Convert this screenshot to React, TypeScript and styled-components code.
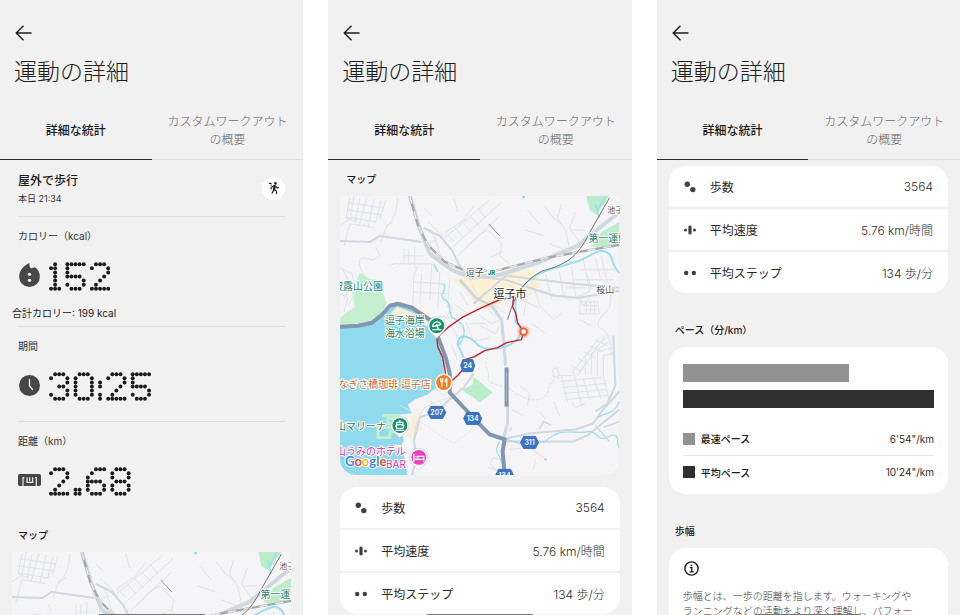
import React from "react";
import styled, { createGlobalStyle } from "styled-components";

const GlobalStyle = createGlobalStyle`
  *, *::before, *::after { box-sizing: border-box; }
  body {
    margin: 0;
    background: #ffffff;
    color: #1c1c1c;
    font-family: Inter, "Noto Sans CJK JP", sans-serif;
    font-size: 12px;
  }
  button { font: inherit; color: inherit; background: none; border: 0; padding: 0; }
  h1, h2, h3, p, dl, dt, dd, ul { margin: 0; padding: 0; font-weight: 400; }
`;

const Gallery = styled.div`
  display: grid;
  grid-template-columns: repeat(3, minmax(0, 1fr));
  gap: 25px;
  height: 100vh;
  overflow: hidden;
`;

const Screen = styled.main`
  position: relative;
  display: flex;
  flex-direction: column;
  background: #f1f1f1;
  overflow: hidden;
`;

const Header = styled.header`
  flex: none;
  padding: 25px 14px 16px;
`;

const BackButton = styled.button`
  display: block;
  height: 16px;
  margin: 0 1px 14px;
  svg { display: block; }
`;

const Title = styled.h1`
  font-family: "Noto Sans CJK JP", sans-serif;
  font-size: 23px;
  font-weight: 300;
  line-height: 30px;
`;

const TabBar = styled.nav`
  flex: none;
  display: grid;
  grid-template-columns: 1fr 1fr;
`;

const Tab = styled.button<{ $active?: boolean }>`
  height: 59px;
  padding: 2px 12px 0;
  line-height: 18px;
  font-weight: ${(p) => (p.$active ? 500 : 300)};
  color: ${(p) => (p.$active ? "#1a1a1a" : "#666666")};
  border-bottom: 1px solid ${(p) => (p.$active ? "#2a2a2a" : "#dedede")};
`;

const Body = styled.div`
  flex: 1 1 0;
  min-height: 0;
  overflow: hidden;
`;

const Rule = styled.hr`
  height: 1px;
  margin: 0 18px;
  border: 0;
  background: #dfdfdf;
`;

const Workout = styled.section`
  display: flex;
  justify-content: space-between;
  align-items: center;
  padding: 12px 18px 10px;
`;

const WorkoutName = styled.h2`
  font-size: 12px;
  font-weight: 500;
  line-height: 18px;
  margin-bottom: 2px;
`;

const WorkoutTime = styled.p`
  font-size: 9px;
  line-height: 14px;
  color: #333333;
`;

const RoundBadge = styled.span`
  display: flex;
  align-items: center;
  justify-content: center;
  width: 23px;
  height: 23px;
  margin-bottom: 2px;
  border-radius: 50%;
  background: #ffffff;
`;

const Metric = styled.section`
  padding-top: 11px;
`;

const MetricLabel = styled.h3`
  margin: 0 18px 18px;
  font-size: 10px;
  line-height: 16px;
  color: #333333;
`;

const MetricValue = styled.div`
  display: flex;
  align-items: center;
  gap: 8px;
  height: 29px;
  padding: 0 18px;
`;

const MetricIcon = styled.span`
  display: flex;
  justify-content: center;
  width: 23px;
  padding-bottom: 3px;
`;

const MetricNote = styled.p`
  margin: 14px 12px 5px;
  font-size: 10px;
  line-height: 16px;
  color: #222222;
`;

const MetricEnd = styled.div`
  height: 20px;
`;

const Dots = styled.svg`
  display: block;
  height: 29px;
  width: auto;
  fill: #1a1a1a;
`;

const SectionTitle = styled.h2<{ $top: number }>`
  padding: ${(p) => p.$top}px 18px 7px;
  font-size: 10px;
  font-weight: 500;
  line-height: 20px;
`;

const MapFrame = styled.div`
  margin: 0 12px;
  border-radius: 0 0 16px 16px;
  overflow: hidden;
  svg { display: block; width: 100%; height: auto; }
`;

const StatList = styled.dl<{ $top: number }>`
  display: grid;
  gap: 2px;
  margin: ${(p) => p.$top}px 12px 0;
  border-radius: 17px;
  overflow: hidden;
`;

const StatRow = styled.div`
  display: flex;
  align-items: center;
  height: 41px;
  padding: 0 15px;
  border-radius: 2px;
  background: #ffffff;
  svg { flex: none; margin-right: 14px; }
`;

const StatName = styled.dt`
  flex: 1;
  color: #2a2a2a;
`;

const StatValue = styled.dd`
  color: #2c2c2c;
  font-weight: 300;
`;

const Card = styled.section`
  margin: 0 12px;
  padding: 17px 14px 6px;
  border-radius: 17px;
  background: #ffffff;
`;

const Bar = styled.div<{ $tone: string }>`
  height: 18px;
  margin-bottom: 8px;
  background: ${(p) => p.$tone};
`;

const Legend = styled.dl`
  padding-top: 6px;
`;

const LegendRow = styled.div`
  display: flex;
  align-items: center;
  height: 33px;
  font-size: 10px;
  & + & {
    border-top: 1px solid #e8e8e8;
  }
`;

const Swatch = styled.span<{ $tone: string }>`
  width: 12px;
  height: 12px;
  margin-right: 6px;
  background: ${(p) => p.$tone};
`;

const LegendName = styled.dt`
  flex: 1;
  font-weight: 500;
`;

const LegendValue = styled.dd`
  color: #2a2a2a;
`;

const InfoCard = styled(Card)`
  padding: 13px 32px 16px 14px;
  svg { display: block; margin-bottom: 12px; }
`;

const InfoText = styled.p`
  font-size: 10px;
  font-weight: 300;
  line-height: 15px;
  color: #3c3c3c;
`;

const HomeIndicator = styled.div`
  position: absolute;
  bottom: 0;
  left: 50%;
  width: 35%;
  height: 1px;
  transform: translateX(-50%);
  background: #777777;
`;

const GLYPHS: Record<string, string[]> = {
  "0": [".###.", "#...#", "#...#", "#...#", "#...#", "#...#", ".###."],
  "1": [".#.", "##.", ".#.", ".#.", ".#.", ".#.", "###"],
  "2": [".###.", "#...#", "....#", "...#.", "..#..", ".#...", "#####"],
  "3": [".###.", "#...#", "....#", "..##.", "....#", "#...#", ".###."],
  "5": ["#####", "#....", "#....", "####.", "....#", "#...#", ".###."],
  "6": ["..###", ".#...", "#....", "####.", "#...#", "#...#", ".###."],
  "8": [".###.", "#...#", "#...#", ".###.", "#...#", "#...#", ".###."],
  ":": [".", ".", "#", "#", ".", "#", "#"],
  ".": ["..", "..", "..", "..", "..", "##", "##"],
};

function DotNumber({ value }: { value: string }) {
  const dots: React.ReactNode[] = [];
  let column = 0;
  [...value].forEach((ch, n) => {
    const rows = GLYPHS[ch];
    rows.forEach((row, y) =>
      [...row].forEach((cell, x) => {
        if (cell === "#") {
          dots.push(<circle key={`${n}-${x}-${y}`} cx={(column + x) * 10 + 5} cy={y * 10 + 5.5} r={4.8} />);
        }
      })
    );
    column += rows[0].length + 1;
  });
  return (
    <Dots viewBox={`0 0 ${(column - 1) * 10} 71`} role="img" aria-label={value}>
      {dots}
    </Dots>
  );
}

const FlameIcon = () => (
  <svg width="21" height="24" viewBox="0 0 62 72">
    <path d="M31 0V9Q33 18 40 15L47 13Q62 23 62 41A31 31 0 0 1 0 41C0 22 14 8 31 0Z" fill="#474747" />
    <circle cx="31" cy="34" r="5" fill="#f1f1f1" />
    <circle cx="31" cy="52" r="5" fill="#f1f1f1" />
  </svg>
);

const ClockIcon = () => (
  <svg width="21" height="21" viewBox="0 0 21 21">
    <circle cx="10.5" cy="10.5" r="10.5" fill="#474747" />
    <path d="M10.5 4.5v6.5l3 3.5" fill="none" stroke="#f1f1f1" strokeWidth="1.3" strokeLinecap="round" />
  </svg>
);

const RulerIcon = () => (
  <svg width="23" height="12" viewBox="0 0 69 36">
    <rect width="69" height="36" rx="5" fill="#474747" />
    <path d="M15 36V11H19M55 36V11H51M27 10V25H44V10M35 10V21" fill="none" stroke="#f1f1f1" strokeWidth="3.5" />
  </svg>
);

const WalkIcon = () => (
  <svg width="14" height="14" viewBox="0 0 14 14" fill="none" stroke="#222" strokeLinecap="round" strokeLinejoin="round">
    <circle cx="8.4" cy="2.4" r="1.3" fill="#222" stroke="none" />
    <path d="M7.6 5.2L7 8.4" strokeWidth="2.4" />
    <path d="M7 8.6L5 12.2M7.4 8.6L9.3 10L9.6 12.5M6.6 5L4.4 6.2L4 8M8.6 5L10 6.8L11.5 6.6" strokeWidth="1.2" />
    <path d="M2.4 2.4h1.6M4 4h.4" strokeWidth="1.2" />
  </svg>
);

const StepsIcon = () => (
  <svg width="12" height="12" viewBox="0 0 12 12" fill="#404040">
    <circle cx="3.3" cy="3.3" r="2.7" />
    <circle cx="8.8" cy="8.6" r="2.7" />
  </svg>
);
const SpeedIcon = () => (
  <svg width="12" height="12" viewBox="0 0 12 12" fill="#404040">
    <circle cx="1.5" cy="6" r="1.5" />
    <circle cx="10.5" cy="6" r="1.5" />
    <rect x="4.4" y="1.6" width="3.2" height="8.8" rx="1.4" />
  </svg>
);
const CadenceIcon = () => (
  <svg width="12" height="12" viewBox="0 0 12 12" fill="#404040">
    <circle cx="2.2" cy="6" r="2.2" />
    <circle cx="9.8" cy="6" r="2.2" />
  </svg>
);
const InfoIcon = () => (
  <svg width="16" height="16" viewBox="0 0 16 16" fill="none" stroke="#1c1c1c">
    <circle cx="8.5" cy="7.5" r="6.6" strokeWidth="1.4" />
    <path d="M6.8 6.6H8.8V10.7M6.6 10.8H10.7" strokeWidth="1.3" />
    <circle cx="8.5" cy="4.3" r=".9" fill="#1c1c1c" stroke="none" />
  </svg>
);

function Shield({ x, y, label }: { x: number; y: number; label: string }) {
  return (
    <g transform={`translate(${x} ${y})`}>
      <path d={label.length < 3 ? "M-5-6H5L7 0L5 6H-5L-7 0Z" : "M-6-6H6L9 0L6 6H-6L-9 0Z"} fill="#3b72c4" stroke="#3b72c4" strokeLinejoin="round" />
      <text y="2.8" textAnchor="middle" fontSize="7" fontWeight="600" fill="#fff">{label}</text>
    </g>
  );
}

function Pin({ x, y, color, children }: { x: number; y: number; color: string; children: React.ReactNode }) {
  return (
    <g transform={`translate(${x} ${y})`}>
      <path d="M0 13C-2 9-9 7-9 0A9 9 0 0 1 9 0C9 7 2 9 0 13Z" fill="#fff" stroke="#b9bec4" strokeWidth=".5" />
      <circle r="7.5" fill={color} />
      <g fill="none" stroke="#fff" strokeWidth="1.3" strokeLinecap="round" strokeLinejoin="round">{children}</g>
    </g>
  );
}

const streets = [
  "M10 2L6 22L17 26M14 0L10 24M20 2L15 27M27 1L19 30M34 3L28 32M41 5L36 26M9 7L44 12M7 14L43 19M6 21L36 26M23 29L33 32M46 4L40 23",
  "M0 30L12 22M4 50L10 28L24 30M58 2C57 18 52 26 46 32L41 46M46 30L54 26M36 52L40 60L33 64L22 62C17 64 20 72 24 80",
  "M64 53V68H92M69 53V68M75 50V72M64 60H84M64 68H54L49 70M78 70L74 80L73 112M82 78L80 108M92 68L90 104M73 86L104 88M74 96L108 98M100 76L98 114M110 82L108 112",
  "M84 50L96 44L92 36L84 32M96 44L100 58L112 70M105 42L150 4M110 54L162 6M118 60L160 20M106 36L124 24L134 10M115 46L104 36M124 42L114 30M132 36L122 26M140 30L130 20M146 22L138 12M126 52L138 40L148 34",
  "M88 26L101 38L110 52M92 20L84 12M118 16L114 2M148 34L162 48L160 60L170 68M150 62L162 56",
  "M222 8L218 22L226 34L230 52M236 16L230 32L240 46M212 20L224 30M246 34L234 34M200 28L188 14M186 34L204 40M210 48L226 54M205 10L214 22",
  "M168 88L186 100L200 94L232 104L250 96M192 84L200 110M206 78L212 104M220 76L224 100M232 70L236 100M244 64L250 96M256 62L262 86M240 74H276M236 84H274M248 78L252 94M262 60L268 88M226 92H246M238 100L244 110L250 102",
  "M241 106H258L260 118H240ZM244 110H259M244 114H259M247 105V118M251 105V118M255 105V118",
  "M140 120L152 128L164 122M140 130L156 138L160 130M146 112L156 120M120 96L128 110M132 88L138 100M114 108L128 118M100 120L120 124M112 130L122 150M126 126L134 146L150 142M130 128H146M112 150L118 164M150 106L166 118M104 100L112 112L104 126",
  "M180 104L200 112M188 100L184 120M200 110L214 124L222 118M192 128L206 138M240 124L252 130M272 98L270 112C262 122 256 126 260 132C270 136 272 148 272 160",
  "M0 72L12 78L16 96L8 110M0 86L10 90L4 104M3 74L9 86M0 98L8 102L4 116",
  "M118 198C104 206 88 206 82 216L76 230L74 246M60 210L72 216M90 204L98 212",
  "M150 268L154 262L164 266L158 276ZM148 272L160 276M170 254L190 252L204 262M196 264L194 274",
  "M180 190L190 198L188 210M200 216L206 224M172 214L184 220M214 206L220 220",
  "M213 174L218 172L220 180L214 182ZM218 180L232 180M220 186L262 182M222 192L266 188M224 198L266 194M226 204L268 200M232 206L236 212L246 208M222 180L228 206M234 176L242 210M244 184L250 204M254 182L262 204M264 180L270 206",
  "M232 178L260 142M238 180L266 140M246 180V160L270 140M252 180V158L270 146M258 180V156L274 152M264 180V160L274 158M232 170L242 176M238 162L250 170M244 156L256 162M250 150L262 156M256 144L268 150",
];

function RouteMap() {
  return (
    <svg viewBox="0 0 280 280" role="img" aria-label="マップ" fontFamily='Inter, "Noto Sans CJK JP", sans-serif'>
      <rect width="280" height="280" fill="#f5f4f6" />
      <path d="M0 130L32 127L46 116L57 108L76 116L94 128L98 146L104 166L104 186L88 199L75 204L68 209L72 218L78 222L70 236L62 248L68 280H0Z" fill="#90daee" />
      <path d="M72 218L58 219L54 231L62 239L66 250L53 249L66 262L68 280H82L84 224Z" fill="#f5f4f6" />
      <path d="M42 220H59V223H48V228H55V232H38V242H50V236H60V230" fill="none" stroke="#c2eed0" strokeWidth="3" />
      <path d="M78 212L82 234L70 244L64 236Z" fill="#f8f0df" />
      <path d="M20 77L30 83L37 84L47 107L38 124L8 129L0 129V122L15 111L12 94Z" fill="#c3efcf" />
      <path d="M50 118L57 111L76 118L92 128L94 134L86 130L66 120Z" fill="#f9f0da" />
      <path d="M62 108L78 114L92 124" fill="none" stroke="#f9efd2" strokeWidth="4" />
      <path d="M247 0H270L257 19L250 14Z M252 50L262 36L280 26V49L260 52Z M123 194L133 189L134 181L141 187L153 197L140 207L135 203L124 196Z" fill="#bcedcb" />
      <path d="M113 84L132 80L140 76L196 74L200 92L186 98L162 106L150 116L134 106L128 96Z" fill="#fdf1d3" />

      <g fill="none" stroke="#dde3e8" strokeWidth="1">
        {streets.map((d) => <path key={d} d={d} />)}
      </g>
      <g fill="none" stroke="#c9dfd3" strokeWidth=".7" strokeDasharray="3 1.5">
        <path d="M148 162C142 170 152 176 148 184C156 192 166 188 176 198C188 204 198 208 206 200C212 196 204 188 220 182" />
        <path d="M80 226L90 232L100 240L114 248L130 236L140 222" stroke="#e0e0e3" />
      </g>
      <g fill="none" stroke="#cfd8e0" strokeLinejoin="round">
        <path d="M0 45L30 46L40 40L62 43L82 46" strokeWidth="2" />
        <path d="M84 32L100 40L112 54L122 74" strokeWidth="2" />
        <path d="M70 0L79 30L90 58L112 74L132 82L160 79L198 67L238 50L260 32L280 16" strokeWidth="4" />
        <path d="M120 84L136 102L152 110L162 124L164 146L166 170M168 210V228L164 242" strokeWidth="3" />
        <path d="M146 82L166 84L190 92L214 100L240 102L280 95M166 80L200 84L234 88L280 92M134 108L166 80" strokeWidth="2" />
        <path d="M166 243L190 238L236 234L254 228L262 216L280 196M166 246L234 246L248 240L280 214M274 140L276 190L268 208L256 216" strokeWidth="2" />
        <path d="M72 280L77 262L74 246L80 222L96 216L124 192L134 178" strokeWidth="2" />
        <path d="M170 236L172 232M200 234L204 226L212 230M256 230L270 246M264 232L280 226" strokeWidth="1.5" />
      </g>
      <g fill="none" stroke="#9adff0" strokeWidth="1.5">
        <path d="M280 77C270 68 276 57 263 55C252 56 244 66 232 67C218 73 204 73 193 82C182 90 174 100 176 112L176 127C184 132 182 140 176 145C166 154 146 156 138 149C130 140 118 136 118 149L124 162" strokeWidth="2" />
        <path d="M104 88C108 98 98 96 104 104C114 106 106 120 116 124C128 130 126 142 118 150M94 68L98 76M260 22L256 8M266 0L258 14" />
        <path d="M164 242C182 252 196 248 206 246C222 230 236 240 250 236C262 238 256 248 272 240C282 238 276 250 280 252M160 246C152 260 162 258 162 268M258 222C268 216 274 220 280 206" strokeWidth="1.2" />
      </g>
      <circle cx="184" cy="1" r="1.5" fill="#8edaf0" />
      <circle cx="206" cy="264" r="1.2" fill="#8edaf0" />
      <path d="M149 28L160 40" stroke="#8497ba" strokeWidth="1" />

      <g fill="none">
        <path d="M70 0L78 29L88 49L105 66L128 76L160 74L207 62L240 56L280 49" stroke="#a8a8a8" strokeWidth="2.2" />
        <path d="M70 0L78 29L88 49L105 66L128 76L160 74L207 62L240 56L280 49" stroke="#e8e8e8" strokeWidth="1.6" strokeDasharray="8 8" />
        <path d="M270 2L250 37C238 62 226 69 203 75C186 84 176 96 168 124" stroke="#737373" strokeWidth="1" />
      </g>
      <g fill="none" stroke="#8296b1" strokeLinejoin="round">
        <path d="M0 131L18 130L32 127L42 119L50 110L58 108L72 112L90 124L97 138L106 162L110 178L110 197L124 212L140 229L150 239L165 244L163 256L165 278" strokeWidth="4" />
        <path d="M167 172V211" strokeWidth="4" />
        <path d="M167 177V206" stroke="#a8b6ca" strokeWidth="1" />
      </g>

      <path d="M184 136L178 127L176 117L173 111L174 101L160 104L140 113L122 122L108 132L97 142L98 151L103 162L106 179L110 187L118 180L123 174L125 164L135 161L145 155L158 152L167 147L182 144L184 136" fill="none" stroke="#c5202e" strokeWidth="1.4" strokeLinejoin="round" />
      <circle cx="184" cy="136" r="6.5" fill="#ff7a50" opacity=".3" />
      <circle cx="184" cy="136" r="3.3" fill="#fff" stroke="#f3562f" strokeWidth="1.8" />

      <Shield x={128} y={170} label="24" />
      <Shield x={97} y={217} label="207" />
      <Shield x={133} y={223} label="134" />
      <Shield x={190} y={247} label="311" />
      <Shield x={165} y={280} label="134" />

      <g stroke="#fff" strokeWidth="2" strokeLinejoin="round" paintOrder="stroke" fontSize="10" fontWeight="400">
        <g fill="#2b8064">
          <text x="43" y="94" textAnchor="end">披露山公園</text>
          <text x="45" y="128">逗子海岸</text>
          <text x="45" y="141">海水浴場</text>
          <text x="249" y="46">第一運動</text>
          <text x="46" y="235" textAnchor="end">葉山マリーナ</text>
        </g>
        <text x="126" y="80" fontSize="9" fill="#3b4c63">逗子</text>
        <text x="154" y="102" fontSize="11" fill="#222">逗子市</text>
        <text x="257" y="97" fontSize="9" fill="#555">桜山</text>
        <text x="268" y="17" fontSize="8" fill="#555">池子</text>
        <text x="91" y="192" textAnchor="end" fill="#cf6a1c">なぎさ橋珈琲 逗子店</text>
        <g fill="#ce30a4">
          <text x="66" y="260" textAnchor="end">葉山うみのホテル</text>
          <text x="66" y="273" textAnchor="end">BAR</text>
        </g>
      </g>
      <rect x="147" y="72" width="9" height="8" rx="1" fill="#fff" />
      <text x="148" y="79" fontSize="6" fontWeight="800" fill="#16875a">JR</text>

      <Pin x={97} y={130} color="#159165">
        <path d="M-4 0C-3-5 3-5 4-1L-4 1M0-1L2 4M-4 4H4" />
      </Pin>
      <Pin x={104} y={187} color="#f07f22">
        <path d="M-3-4V-1M-1-4V-1M-2-1V4M-3-1H-1M3-4V4M3-4C1-3 1 0 3 0" />
      </Pin>
      <Pin x={60} y={230} color="#159165">
        <path d="M-3-1V-3H3V-1M0-3V-5M-4 0L0-1L4 0L3 3H-3ZM-4 5H4" />
      </Pin>
      <Pin x={79} y={262} color="#ea45bd">
        <path d="M-5-3V4M-5 2H5V4M5 2V-1H-1V2M-3-.5H-2.5" />
      </Pin>

      <text x="5" y="271" fontFamily="Lato, sans-serif" fontSize="13" fontWeight="700" stroke="#fff" strokeWidth="2" paintOrder="stroke">
        <tspan fill="#4285f4">G</tspan>
        <tspan fill="#ea4335">o</tspan>
        <tspan fill="#fbbc05">o</tspan>
        <tspan fill="#4285f4">g</tspan>
        <tspan fill="#34a853">l</tspan>
        <tspan fill="#ea4335">e</tspan>
      </text>
    </svg>
  );
}

function Phone({ children }: { children: React.ReactNode }) {
  return (
    <Screen>
      <Header>
        <BackButton aria-label="戻る">
          <svg width="17" height="16" viewBox="0 0 17 16" fill="none" stroke="#1c1c1c" strokeWidth="1.4">
            <path d="M8.5.7L1.2 8L8.5 15.3M1.2 8H16.5" />
          </svg>
        </BackButton>
        <Title>運動の詳細</Title>
      </Header>
      <TabBar>
        <Tab $active>詳細な統計</Tab>
        <Tab>カスタムワークアウト<br />の概要</Tab>
      </TabBar>
      <Body>{children}</Body>
      <HomeIndicator />
    </Screen>
  );
}

function Stats({ top }: { top: number }) {
  return (
    <StatList $top={top}>
      <StatRow><StepsIcon /><StatName>歩数</StatName><StatValue>3564</StatValue></StatRow>
      <StatRow><SpeedIcon /><StatName>平均速度</StatName><StatValue>5.76 km/時間</StatValue></StatRow>
      <StatRow><CadenceIcon /><StatName>平均ステップ</StatName><StatValue>134 歩/分</StatValue></StatRow>
    </StatList>
  );
}

const FASTEST = "#929292";
const AVERAGE = "#303030";

export default function App() {
  return (
    <>
      <GlobalStyle />
      <Gallery>
        <Phone>
          <Workout>
            <div>
              <WorkoutName>屋外で歩行</WorkoutName>
              <WorkoutTime>本日 21:34</WorkoutTime>
            </div>
            <RoundBadge><WalkIcon /></RoundBadge>
          </Workout>
          <Rule />
          <Metric>
            <MetricLabel>カロリー（kcal）</MetricLabel>
            <MetricValue><MetricIcon><FlameIcon /></MetricIcon><DotNumber value="152" /></MetricValue>
            <MetricNote>合計カロリー: 199 kcal</MetricNote>
          </Metric>
          <Rule />
          <Metric>
            <MetricLabel>期間</MetricLabel>
            <MetricValue><MetricIcon><ClockIcon /></MetricIcon><DotNumber value="30:25" /></MetricValue>
            <MetricEnd />
          </Metric>
          <Rule />
          <Metric>
            <MetricLabel>距離（km）</MetricLabel>
            <MetricValue><MetricIcon><RulerIcon /></MetricIcon><DotNumber value="2.68" /></MetricValue>
          </Metric>
          <SectionTitle $top={29}>マップ</SectionTitle>
          <MapFrame><RouteMap /></MapFrame>
        </Phone>

        <Phone>
          <SectionTitle $top={9}>マップ</SectionTitle>
          <MapFrame><RouteMap /></MapFrame>
          <Stats top={12} />
        </Phone>

        <Phone>
          <Stats top={6} />
          <SectionTitle $top={27}>ペース（分/km）</SectionTitle>
          <Card>
            <Bar $tone={FASTEST} style={{ width: `${(414 / 624) * 100}%` }} />
            <Bar $tone={AVERAGE} style={{ width: "100%" }} />
            <Legend>
              <LegendRow><Swatch $tone={FASTEST} /><LegendName>最速ペース</LegendName><LegendValue>6'54"/km</LegendValue></LegendRow>
              <LegendRow><Swatch $tone={AVERAGE} /><LegendName>平均ペース</LegendName><LegendValue>10'24"/km</LegendValue></LegendRow>
            </Legend>
          </Card>
          <SectionTitle $top={27}>歩幅</SectionTitle>
          <InfoCard>
            <InfoIcon />
            <InfoText>歩幅とは、一歩の距離を指します。ウォーキングやランニングなどの活動をより深く理解し、パフォー</InfoText>
          </InfoCard>
        </Phone>
      </Gallery>
    </>
  );
}
